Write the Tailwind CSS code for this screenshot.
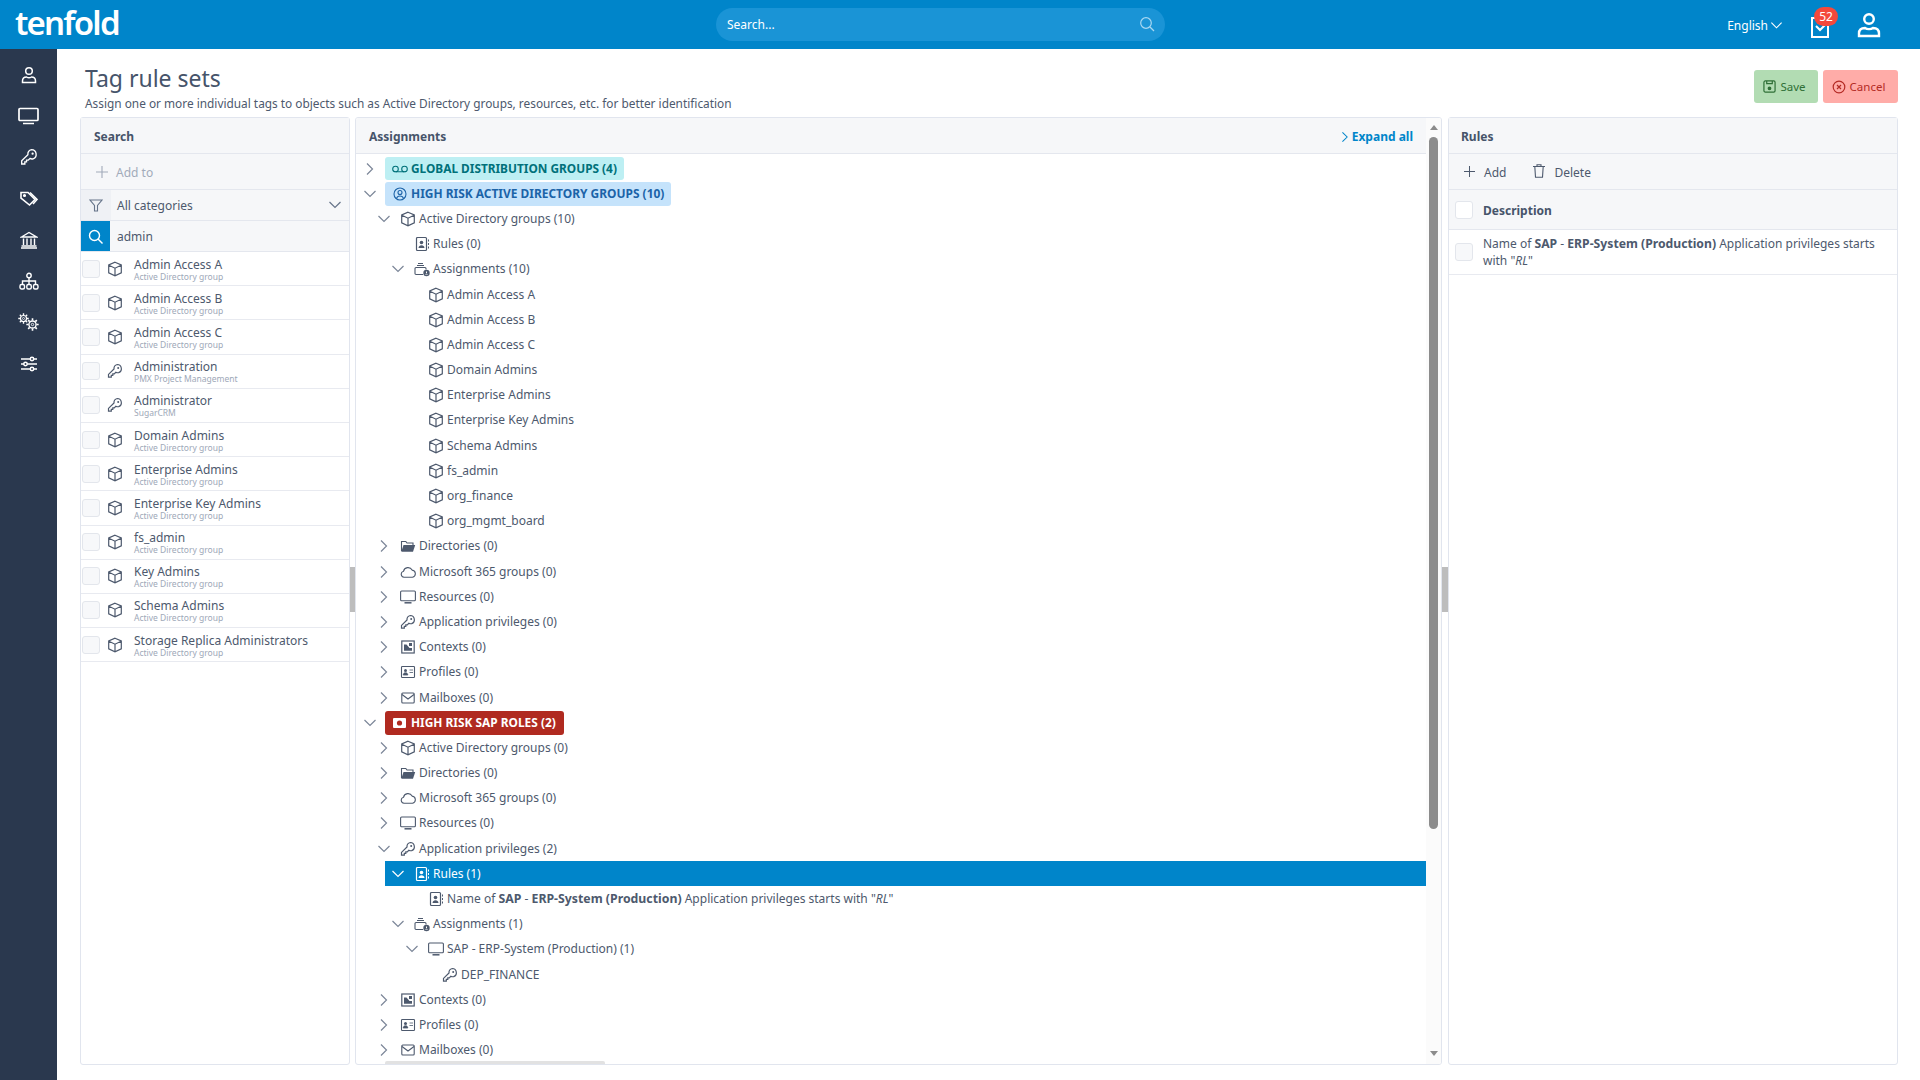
<!DOCTYPE html>
<html lang="en"><head><meta charset="utf-8"><title>Tag rule sets</title>
<script src="https://cdn.jsdelivr.net/npm/@tailwindcss/browser@4"></script></head>
<body class="m-0">
<svg class="hidden">
<defs>
<symbol id="chev-r" viewBox="0 0 14 14"><path d="M4 1.500 9.500 7 4 12.500" fill="none" stroke="currentColor" stroke-width="1.200"/></symbol>
<symbol id="chev-d" viewBox="0 0 14 14"><path d="M1.500 4 7 9.500 12.500 4" fill="none" stroke="currentColor" stroke-width="1.200"/></symbol>
<symbol id="cube" viewBox="0 0 16 16"><path d="M8 1.200 14.300 4v7.800L8 14.800l-6.300-3V4zM1.900 4.200 8 7.200l6.100-3M8 7.200v7.400" fill="none" stroke="currentColor" stroke-width="1.200"/></symbol>
<symbol id="key" viewBox="0 0 16 16"><path d="M10.300 1.500a4.200 4.200 0 0 1 1.400 8.100 4.200 4.200 0 0 1-2.900-.3L7.300 10.800H5.800v1.500H4.300v1.900H1.500v-2.800l5.500-5.500a4.200 4.200 0 0 1 3.300-4.400z" fill="none" stroke="currentColor" stroke-width="1.200"/><circle cx="11.200" cy="5" r="1" fill="currentColor"/></symbol>
<symbol id="rules" viewBox="0 0 16 16"><rect x="2.500" y="1.500" width="10" height="13" rx="1" fill="none" stroke="currentColor" stroke-width="1.200"/><circle cx="7.500" cy="6.500" r="1.800" fill="currentColor"/><path d="M4.500 12c.2-2 1.300-2.800 3-2.800s2.800.8 3 2.800z" fill="currentColor"/><path d="M14.500 3.500v2M14.500 7v2M14.500 10.500v2" stroke="currentColor" stroke-width="1"/></symbol>
<symbol id="assign" viewBox="0 0 16 16"><path d="M1 7.500a1 1 0 0 1 1-1h9a1 1 0 0 1 1 1v1M9 13.500H2a1 1 0 0 1-1-1v-5" fill="none" stroke="currentColor" stroke-width="1.100"/><path d="M3 4.500h7M4 2.500h5" stroke="currentColor" stroke-width="1.100"/><circle cx="12.500" cy="12" r="3.200" fill="currentColor"/><path d="M12.500 10.500v1.500M11.500 13.600c.3-.6 1.700-.6 2 0" stroke="#fff" stroke-width="1" fill="none"/></symbol>
<symbol id="folder" viewBox="0 0 16 16"><path d="M1.500 13V3.500h4.300l1.200 1.500h6v2" fill="none" stroke="currentColor" stroke-width="1.100"/><path d="M1.300 13.800 3.500 7h11.700l-2.200 6.800z" fill="currentColor"/></symbol>
<symbol id="cloud" viewBox="0 0 16 16"><path d="M4 13.200a3 3 0 0 1-.5-5.900 4.600 4.600 0 0 1 8.600-1.200 3.600 3.600 0 0 1 .4 7.100z" fill="none" stroke="currentColor" stroke-width="1.100"/></symbol>
<symbol id="monitor" viewBox="0 0 16 16"><rect x=".6" y="2" width="14.800" height="9.800" rx="1" fill="none" stroke="currentColor" stroke-width="1.100"/><path d="M4.500 13.800h7" stroke="currentColor" stroke-width="1.500"/></symbol>
<symbol id="ctx" viewBox="0 0 16 16"><rect x="1.800" y="2" width="12.400" height="12" fill="none" stroke="currentColor" stroke-width="1.200"/><path d="M4 11.800V5.500h2.500l3 3.500h2.500v2.800z" fill="currentColor"/><rect x="9" y="4" width="3" height="3" fill="currentColor"/></symbol>
<symbol id="profile" viewBox="0 0 16 16"><rect x="1.500" y="2.500" width="13" height="11" rx=".8" fill="none" stroke="currentColor" stroke-width="1.100"/><circle cx="5.500" cy="6.500" r="1.500" fill="currentColor"/><path d="M3.200 11c.2-1.600 1-2.200 2.300-2.200s2.100.6 2.300 2.200zM9.500 6h3.500M9.500 8.500h3.500" fill="currentColor" stroke="currentColor" stroke-width=".8"/></symbol>
<symbol id="mail" viewBox="0 0 16 16"><rect x="1.800" y="3" width="12.400" height="10" rx="1" fill="none" stroke="currentColor" stroke-width="1.100"/><path d="M2 4.500 8 9l6-4.500" fill="none" stroke="currentColor" stroke-width="1.100"/></symbol>
<symbol id="gear" viewBox="0 0 12 12"><circle cx="6" cy="6" r="3.300" fill="none" stroke="currentColor" stroke-width="1.300"/><circle cx="6" cy="6" r="1.100" fill="none" stroke="currentColor" stroke-width=".8"/><path d="M6 .3v2M6 9.700v2M.3 6h2M9.700 6h2M2 2l1.400 1.400M8.600 8.600 10 10M10 2 8.600 3.400M3.400 8.600 2 10" stroke="currentColor" stroke-width="1.500"/></symbol>
</defs>
</svg>
<div class="w-[1920px] h-[1080px] overflow-hidden flex flex-col bg-white text-[#4d596d] text-[12px]" style="font-family:'Noto Sans','Open Sans',sans-serif">
<header class="h-[49px] shrink-0 bg-[#0085ca] flex items-center text-white relative">
  <div class="w-[716px] shrink-0 pl-[15px] text-[33px] font-semibold leading-none tracking-[-1.8px] pb-[5px]">tenfold</div>
  <div class="w-[449px] h-[33px] shrink-0 rounded-full bg-[#1a94d6] flex items-center pl-[11px] pr-[10px] justify-between">
    <span class="text-[12px] pt-[1px]">Search...</span>
    <svg class="w-[16px] h-[16px] text-[#a9d8f2] -mt-[2px]" viewBox="0 0 16 16" fill="none" stroke="currentColor" stroke-width="1.200"><circle cx="7" cy="7" r="5.300"/><path d="m11 11 4 4"/></svg>
  </div>
  <div class="ml-auto flex items-center">
    <span class="text-[12px] pt-[2px]">English</span>
    <svg class="w-[13px] h-[13px] ml-[2px] mr-[27px] mt-[2px]"><use href="#chev-d"/></svg>
    <div class="relative w-[22px] h-[26px] mr-[25px] mt-[3px]">
      <svg class="w-[20px] h-[26px]" viewBox="0 0 20 26" fill="none" stroke="currentColor" stroke-width="2"><path d="M5 5H2v19h16V5"/><path d="m6 13 4 4 5-5" stroke-width="2"/></svg>
      <span class="absolute left-[4px] -top-[6px] w-[24px] h-[19px] rounded-full bg-[#f4493c] text-[12px] leading-[19px] text-center">52</span>
    </div>
    <svg class="w-[24px] h-[26px] mr-[39px]" viewBox="0 0 24 26" fill="none" stroke="currentColor" stroke-width="2.400"><circle cx="12" cy="7" r="4.800"/><path d="M2 24v-2.500c0-4 3-5.500 6-5.500 2 1.500 6 1.500 8 0 3 0 6 1.500 6 5.500V24z"/></svg>
  </div>
</header>
<div class="flex-1 flex min-h-0">
  <nav class="w-[57px] shrink-0 bg-[#2a384e] text-white pt-[5px] flex flex-col">
    <div class="h-[41.300px] flex items-center justify-center"><svg class="w-[18px] h-[18px]" viewBox="0 0 18 18" fill="none" stroke="currentColor" stroke-width="1.500"><circle cx="9" cy="5" r="3.300"/><path d="M2.500 16.500v-1.500c0-2.800 2-4 4-4 1.500 1 3.500 1 5 0 2 0 4 1.200 4 4v1.500z"/></svg></div>
    <div class="h-[41.300px] flex items-center justify-center"><svg class="w-[21px] h-[18px]" viewBox="0 0 21 18" fill="none" stroke="currentColor" stroke-width="1.700"><rect x="1" y="1.500" width="19" height="12" rx="1"/><path d="M5 16.500h11" stroke-width="1.500"/></svg></div>
    <div class="h-[41.300px] flex items-center justify-center"><svg class="w-[18px] h-[18px]"><use href="#key"/></svg></div>
    <div class="h-[41.300px] flex items-center justify-center"><svg class="w-[18px] h-[18px]" viewBox="0 0 18 18" fill="none" stroke="currentColor" stroke-width="1.600"><path d="M1 2.500h7l7 7-5.500 5.500-8.500-7z"/><path d="m10 2.500 7 7-4 4.500"/><circle cx="4.500" cy="5.500" r=".8" fill="currentColor"/></svg></div>
    <div class="h-[41.300px] flex items-center justify-center"><svg class="w-[18px] h-[18px]" viewBox="0 0 18 18" fill="none" stroke="currentColor" stroke-width="1.400"><path d="M1.500 6 9 1.500 16.500 6zM3.500 7.500v6.500M7 7.500v6.500M11 7.500v6.500M14.500 7.500v6.500M1.500 15h15M1 17h16"/></svg></div>
    <div class="h-[41.300px] flex items-center justify-center"><svg class="w-[20px] h-[18px]" viewBox="0 0 20 18" fill="none" stroke="currentColor" stroke-width="1.400"><circle cx="10" cy="3.500" r="2.200"/><path d="M10 6v3M3.500 12V9h13v3M10 9v3"/><rect x="1" y="12.500" width="4.500" height="4.500" rx="1.500"/><rect x="7.800" y="12.500" width="4.500" height="4.500" rx="1.500"/><rect x="14.500" y="12.500" width="4.500" height="4.500" rx="1.500"/></svg></div>
    <div class="h-[41.300px] relative"><svg class="absolute left-[18px] top-[11px] w-[11px] h-[11px]"><use href="#gear"/></svg><svg class="absolute left-[26px] top-[16px] w-[13px] h-[13px]"><use href="#gear"/></svg></div>
    <div class="h-[41.300px] flex items-center justify-center"><svg class="w-[18px] h-[16px]" viewBox="0 0 18 16" fill="none" stroke="currentColor" stroke-width="1.500"><path d="M1 3h16M1 8h16M1 13h16"/><circle cx="12" cy="3" r="1.700" fill="#2a384e"/><circle cx="5.500" cy="8" r="1.700" fill="#2a384e"/><circle cx="12" cy="13" r="1.700" fill="#2a384e"/></svg></div>
  </nav>
  <main class="flex-1 min-w-0 flex flex-col pl-[23px] pr-[22px]">
    <div class="h-[68px] shrink-0 flex justify-between pl-[5px]">
      <div>
        <h1 class="text-[23px] leading-[32px] mt-[13px] font-normal text-[#46546a]">Tag rule sets</h1>
        <p class="text-[11.850px] leading-[16px] mt-[1px]">Assign one or more individual tags to objects such as Active Directory groups, resources, etc. for better identification</p>
      </div>
      <div class="flex gap-[5px] pt-[21px] h-[54px] text-[11.500px]">
        <div class="w-[64px] h-[33px] rounded-[3px] bg-[#b2dcb3] text-[#2f6f36] flex items-center justify-center gap-[4px] pr-[3px]"><svg class="w-[13px] h-[13px]" viewBox="0 0 14 14" fill="none" stroke="currentColor" stroke-width="1.300"><rect x="1" y="1" width="12" height="12" rx="1.500"/><path d="M4 1v3h6V1"/><circle cx="7" cy="9" r="1.400" fill="currentColor"/></svg>Save</div>
        <div class="w-[75px] h-[33px] rounded-[3px] bg-[#ffaca8] text-[#b42b25] flex items-center justify-center gap-[4px] pr-[4px]"><svg class="w-[14px] h-[14px]" viewBox="0 0 14 14" fill="none" stroke="currentColor" stroke-width="1.200"><circle cx="7" cy="7" r="5.800"/><path d="m5 5 4 4m0-4-4 4"/></svg>Cancel</div>
      </div>
    </div>
    <div class="flex-1 min-h-0 flex pb-[15px] relative">
      <section class="w-[270px] shrink-0 border border-[#e1e5ee] rounded-[3px] flex flex-col">
        <div class="h-[36px] shrink-0 bg-[#f6f7f9] border-b border-[#e4e7ee] flex items-center pl-[13px] pt-[2px] font-bold text-[#46546a]">Search</div>
        <div class="h-[36px] shrink-0 bg-[#f6f7f9] border-b border-[#e4e7ee] flex items-center pl-[15px] pt-[3px] text-[#a2abba]"><svg class="w-[12px] h-[12px] mr-[8px] -mt-[3px]" viewBox="0 0 12 12" stroke="currentColor" stroke-width="1.100"><path d="M6 0v12M0 6h12"/></svg>Add to</div>
        <div class="h-[31px] shrink-0 bg-[#f6f7f9] border-b border-[#e4e7ee] flex items-center">
          <span class="w-[30px] h-full bg-[#eff1f5] flex items-center justify-center"><svg class="w-[14px] h-[14px] text-[#66748a]" viewBox="0 0 14 14" fill="none" stroke="currentColor" stroke-width="1.100"><path d="M1 2h12L8.500 7.500V13h-3V7.500z"/></svg></span>
          <span class="ml-[6px] pt-[1px]">All categories</span>
          <svg class="ml-auto mr-[7px] w-[14px] h-[14px] text-[#66748a]"><use href="#chev-d"/></svg>
        </div>
        <div class="h-[31px] shrink-0 bg-[#f6f7f9] border-b border-[#e4e7ee] flex items-center">
          <span class="w-[29px] h-full bg-[#0085ca] flex items-center justify-center mr-[7px]"><svg class="w-[15px] h-[15px] text-white" viewBox="0 0 15 15" fill="none" stroke="currentColor" stroke-width="1.400"><circle cx="6.500" cy="6.500" r="5"/><path d="m10 10 4.500 4.500"/></svg></span><span class="pt-[1px]">admin</span>
        </div>
        <div class="flex items-center h-[34.200px] border-b border-[#e8eaf0] pl-[1px]"><span class="w-[18px] h-[18px] rounded-[3px] border border-[#e3e6ec] bg-[#f7f8fa] shrink-0 mr-[7px]"></span><svg class="w-[16px] h-[16px] shrink-0 mr-[11px]"><use href="#cube"/></svg><div class="pt-[2px]"><div class="text-[12px] leading-[13px]">Admin Access A</div><div class="text-[8.500px] leading-[11px] text-[#9ea8b8]">Active Directory group</div></div></div>
        <div class="flex items-center h-[34.200px] border-b border-[#e8eaf0] pl-[1px]"><span class="w-[18px] h-[18px] rounded-[3px] border border-[#e3e6ec] bg-[#f7f8fa] shrink-0 mr-[7px]"></span><svg class="w-[16px] h-[16px] shrink-0 mr-[11px]"><use href="#cube"/></svg><div class="pt-[2px]"><div class="text-[12px] leading-[13px]">Admin Access B</div><div class="text-[8.500px] leading-[11px] text-[#9ea8b8]">Active Directory group</div></div></div>
        <div class="flex items-center h-[34.200px] border-b border-[#e8eaf0] pl-[1px]"><span class="w-[18px] h-[18px] rounded-[3px] border border-[#e3e6ec] bg-[#f7f8fa] shrink-0 mr-[7px]"></span><svg class="w-[16px] h-[16px] shrink-0 mr-[11px]"><use href="#cube"/></svg><div class="pt-[2px]"><div class="text-[12px] leading-[13px]">Admin Access C</div><div class="text-[8.500px] leading-[11px] text-[#9ea8b8]">Active Directory group</div></div></div>
        <div class="flex items-center h-[34.200px] border-b border-[#e8eaf0] pl-[1px]"><span class="w-[18px] h-[18px] rounded-[3px] border border-[#e3e6ec] bg-[#f7f8fa] shrink-0 mr-[7px]"></span><svg class="w-[16px] h-[16px] shrink-0 mr-[11px]"><use href="#key"/></svg><div class="pt-[2px]"><div class="text-[12px] leading-[13px]">Administration</div><div class="text-[8.500px] leading-[11px] text-[#9ea8b8]">PMX Project Management</div></div></div>
        <div class="flex items-center h-[34.200px] border-b border-[#e8eaf0] pl-[1px]"><span class="w-[18px] h-[18px] rounded-[3px] border border-[#e3e6ec] bg-[#f7f8fa] shrink-0 mr-[7px]"></span><svg class="w-[16px] h-[16px] shrink-0 mr-[11px]"><use href="#key"/></svg><div class="pt-[2px]"><div class="text-[12px] leading-[13px]">Administrator</div><div class="text-[8.500px] leading-[11px] text-[#9ea8b8]">SugarCRM</div></div></div>
        <div class="flex items-center h-[34.200px] border-b border-[#e8eaf0] pl-[1px]"><span class="w-[18px] h-[18px] rounded-[3px] border border-[#e3e6ec] bg-[#f7f8fa] shrink-0 mr-[7px]"></span><svg class="w-[16px] h-[16px] shrink-0 mr-[11px]"><use href="#cube"/></svg><div class="pt-[2px]"><div class="text-[12px] leading-[13px]">Domain Admins</div><div class="text-[8.500px] leading-[11px] text-[#9ea8b8]">Active Directory group</div></div></div>
        <div class="flex items-center h-[34.200px] border-b border-[#e8eaf0] pl-[1px]"><span class="w-[18px] h-[18px] rounded-[3px] border border-[#e3e6ec] bg-[#f7f8fa] shrink-0 mr-[7px]"></span><svg class="w-[16px] h-[16px] shrink-0 mr-[11px]"><use href="#cube"/></svg><div class="pt-[2px]"><div class="text-[12px] leading-[13px]">Enterprise Admins</div><div class="text-[8.500px] leading-[11px] text-[#9ea8b8]">Active Directory group</div></div></div>
        <div class="flex items-center h-[34.200px] border-b border-[#e8eaf0] pl-[1px]"><span class="w-[18px] h-[18px] rounded-[3px] border border-[#e3e6ec] bg-[#f7f8fa] shrink-0 mr-[7px]"></span><svg class="w-[16px] h-[16px] shrink-0 mr-[11px]"><use href="#cube"/></svg><div class="pt-[2px]"><div class="text-[12px] leading-[13px]">Enterprise Key Admins</div><div class="text-[8.500px] leading-[11px] text-[#9ea8b8]">Active Directory group</div></div></div>
        <div class="flex items-center h-[34.200px] border-b border-[#e8eaf0] pl-[1px]"><span class="w-[18px] h-[18px] rounded-[3px] border border-[#e3e6ec] bg-[#f7f8fa] shrink-0 mr-[7px]"></span><svg class="w-[16px] h-[16px] shrink-0 mr-[11px]"><use href="#cube"/></svg><div class="pt-[2px]"><div class="text-[12px] leading-[13px]">fs_admin</div><div class="text-[8.500px] leading-[11px] text-[#9ea8b8]">Active Directory group</div></div></div>
        <div class="flex items-center h-[34.200px] border-b border-[#e8eaf0] pl-[1px]"><span class="w-[18px] h-[18px] rounded-[3px] border border-[#e3e6ec] bg-[#f7f8fa] shrink-0 mr-[7px]"></span><svg class="w-[16px] h-[16px] shrink-0 mr-[11px]"><use href="#cube"/></svg><div class="pt-[2px]"><div class="text-[12px] leading-[13px]">Key Admins</div><div class="text-[8.500px] leading-[11px] text-[#9ea8b8]">Active Directory group</div></div></div>
        <div class="flex items-center h-[34.200px] border-b border-[#e8eaf0] pl-[1px]"><span class="w-[18px] h-[18px] rounded-[3px] border border-[#e3e6ec] bg-[#f7f8fa] shrink-0 mr-[7px]"></span><svg class="w-[16px] h-[16px] shrink-0 mr-[11px]"><use href="#cube"/></svg><div class="pt-[2px]"><div class="text-[12px] leading-[13px]">Schema Admins</div><div class="text-[8.500px] leading-[11px] text-[#9ea8b8]">Active Directory group</div></div></div>
        <div class="flex items-center h-[34.200px] border-b border-[#e8eaf0] pl-[1px]"><span class="w-[18px] h-[18px] rounded-[3px] border border-[#e3e6ec] bg-[#f7f8fa] shrink-0 mr-[7px]"></span><svg class="w-[16px] h-[16px] shrink-0 mr-[11px]"><use href="#cube"/></svg><div class="pt-[2px]"><div class="text-[12px] leading-[13px]">Storage Replica Administrators</div><div class="text-[8.500px] leading-[11px] text-[#9ea8b8]">Active Directory group</div></div></div>
      </section>
      <div class="w-[5px] shrink-0 flex items-start"><span class="w-full h-[45px] mt-[450px] bg-[#bdbdbd]"></span></div>
      <section class="w-[1087px] shrink-0 border border-[#e1e5ee] rounded-[3px] flex relative overflow-hidden">
        <div class="w-[1070px] shrink-0 flex flex-col">
          <div class="h-[36px] shrink-0 bg-[#f6f7f9] border-b border-[#e4e7ee] flex items-center pl-[13px] pr-[13px] pt-[2px] justify-between font-bold text-[#46546a]">Assignments<span class="flex items-center text-[#0085ca]"><svg class="w-[12px] h-[12px] mr-[1px]"><use href="#chev-r"/></svg>Expand all</span></div>
          <div class="pt-[2px]">
            <div class="flex items-center h-[25.200px] pl-[7px]"><svg class="w-[14px] h-[14px] shrink-0 mr-[8px] text-[#7b8698]"><use href="#chev-r"/></svg><span class="h-[23px] rounded-[3px] bg-[#bdeff3] text-[#00717a] font-bold text-[11.850px] px-[7px] flex items-center"><svg class="w-[16px] h-[10px] mr-[3px]" viewBox="0 0 16 10" fill="none" stroke="currentColor" stroke-width="1.100"><circle cx="3.500" cy="5" r="2.800"/><circle cx="12.500" cy="5" r="2.800"/><path d="M3.500 7.800h9"/></svg>GLOBAL DISTRIBUTION GROUPS (4)</span></div>
            <div class="flex items-center h-[25.200px] pl-[7px]"><svg class="w-[14px] h-[14px] shrink-0 mr-[8px] text-[#7b8698]"><use href="#chev-d"/></svg><span class="h-[24px] rounded-[3px] bg-[#c5e3fb] text-[#1c63a8] font-bold text-[11.950px] px-[7px] flex items-center"><svg class="w-[14px] h-[14px] mx-[1px] mr-[4px]" viewBox="0 0 14 14" fill="none" stroke="currentColor" stroke-width="1.100"><circle cx="7" cy="7" r="6"/><circle cx="7" cy="5.500" r="2"/><path d="M3.500 11.500c.5-2 2-2.500 3.500-2.500s3 .5 3.500 2.500"/></svg>HIGH RISK ACTIVE DIRECTORY GROUPS (10)</span></div>
            <div class="flex items-center h-[25.200px] pl-[21px]"><svg class="w-[14px] h-[14px] shrink-0 mr-[9px] text-[#7b8698]"><use href="#chev-d"/></svg><svg class="w-[16px] h-[16px] shrink-0 mr-[3px]"><use href="#cube"/></svg>Active Directory groups (10)</div>
            <div class="flex items-center h-[25.200px] pl-[35px]"><span class="w-[23px] shrink-0"></span><svg class="w-[16px] h-[16px] shrink-0 mr-[3px]"><use href="#rules"/></svg>Rules (0)</div>
            <div class="flex items-center h-[25.200px] pl-[35px]"><svg class="w-[14px] h-[14px] shrink-0 mr-[9px] text-[#7b8698]"><use href="#chev-d"/></svg><svg class="w-[16px] h-[16px] shrink-0 mr-[3px]"><use href="#assign"/></svg>Assignments (10)</div>
            <div class="flex items-center h-[25.200px] pl-[49px]"><span class="w-[23px] shrink-0"></span><svg class="w-[16px] h-[16px] shrink-0 mr-[3px]"><use href="#cube"/></svg>Admin Access A</div>
            <div class="flex items-center h-[25.200px] pl-[49px]"><span class="w-[23px] shrink-0"></span><svg class="w-[16px] h-[16px] shrink-0 mr-[3px]"><use href="#cube"/></svg>Admin Access B</div>
            <div class="flex items-center h-[25.200px] pl-[49px]"><span class="w-[23px] shrink-0"></span><svg class="w-[16px] h-[16px] shrink-0 mr-[3px]"><use href="#cube"/></svg>Admin Access C</div>
            <div class="flex items-center h-[25.200px] pl-[49px]"><span class="w-[23px] shrink-0"></span><svg class="w-[16px] h-[16px] shrink-0 mr-[3px]"><use href="#cube"/></svg>Domain Admins</div>
            <div class="flex items-center h-[25.200px] pl-[49px]"><span class="w-[23px] shrink-0"></span><svg class="w-[16px] h-[16px] shrink-0 mr-[3px]"><use href="#cube"/></svg>Enterprise Admins</div>
            <div class="flex items-center h-[25.200px] pl-[49px]"><span class="w-[23px] shrink-0"></span><svg class="w-[16px] h-[16px] shrink-0 mr-[3px]"><use href="#cube"/></svg>Enterprise Key Admins</div>
            <div class="flex items-center h-[25.200px] pl-[49px]"><span class="w-[23px] shrink-0"></span><svg class="w-[16px] h-[16px] shrink-0 mr-[3px]"><use href="#cube"/></svg>Schema Admins</div>
            <div class="flex items-center h-[25.200px] pl-[49px]"><span class="w-[23px] shrink-0"></span><svg class="w-[16px] h-[16px] shrink-0 mr-[3px]"><use href="#cube"/></svg>fs_admin</div>
            <div class="flex items-center h-[25.200px] pl-[49px]"><span class="w-[23px] shrink-0"></span><svg class="w-[16px] h-[16px] shrink-0 mr-[3px]"><use href="#cube"/></svg>org_finance</div>
            <div class="flex items-center h-[25.200px] pl-[49px]"><span class="w-[23px] shrink-0"></span><svg class="w-[16px] h-[16px] shrink-0 mr-[3px]"><use href="#cube"/></svg>org_mgmt_board</div>
            <div class="flex items-center h-[25.200px] pl-[21px]"><svg class="w-[14px] h-[14px] shrink-0 mr-[9px] text-[#7b8698]"><use href="#chev-r"/></svg><svg class="w-[16px] h-[16px] shrink-0 mr-[3px]"><use href="#folder"/></svg>Directories (0)</div>
            <div class="flex items-center h-[25.200px] pl-[21px]"><svg class="w-[14px] h-[14px] shrink-0 mr-[9px] text-[#7b8698]"><use href="#chev-r"/></svg><svg class="w-[16px] h-[16px] shrink-0 mr-[3px]"><use href="#cloud"/></svg>Microsoft 365 groups (0)</div>
            <div class="flex items-center h-[25.200px] pl-[21px]"><svg class="w-[14px] h-[14px] shrink-0 mr-[9px] text-[#7b8698]"><use href="#chev-r"/></svg><svg class="w-[16px] h-[16px] shrink-0 mr-[3px]"><use href="#monitor"/></svg>Resources (0)</div>
            <div class="flex items-center h-[25.200px] pl-[21px]"><svg class="w-[14px] h-[14px] shrink-0 mr-[9px] text-[#7b8698]"><use href="#chev-r"/></svg><svg class="w-[16px] h-[16px] shrink-0 mr-[3px]"><use href="#key"/></svg>Application privileges (0)</div>
            <div class="flex items-center h-[25.200px] pl-[21px]"><svg class="w-[14px] h-[14px] shrink-0 mr-[9px] text-[#7b8698]"><use href="#chev-r"/></svg><svg class="w-[16px] h-[16px] shrink-0 mr-[3px]"><use href="#ctx"/></svg>Contexts (0)</div>
            <div class="flex items-center h-[25.200px] pl-[21px]"><svg class="w-[14px] h-[14px] shrink-0 mr-[9px] text-[#7b8698]"><use href="#chev-r"/></svg><svg class="w-[16px] h-[16px] shrink-0 mr-[3px]"><use href="#profile"/></svg>Profiles (0)</div>
            <div class="flex items-center h-[25.200px] pl-[21px]"><svg class="w-[14px] h-[14px] shrink-0 mr-[9px] text-[#7b8698]"><use href="#chev-r"/></svg><svg class="w-[16px] h-[16px] shrink-0 mr-[3px]"><use href="#mail"/></svg>Mailboxes (0)</div>
            <div class="flex items-center h-[25.200px] pl-[7px]"><svg class="w-[14px] h-[14px] shrink-0 mr-[8px] text-[#7b8698]"><use href="#chev-d"/></svg><span class="h-[24px] rounded-[3px] bg-[#b02a20] text-white font-bold text-[11.900px] px-[8px] flex items-center"><svg class="w-[13px] h-[10px] mr-[5px]" viewBox="0 0 13 10"><rect width="13" height="10" rx="1" fill="#fff"/><circle cx="6.500" cy="5" r="2.600" fill="#b02a20"/></svg>HIGH RISK SAP ROLES (2)</span></div>
            <div class="flex items-center h-[25.200px] pl-[21px]"><svg class="w-[14px] h-[14px] shrink-0 mr-[9px] text-[#7b8698]"><use href="#chev-r"/></svg><svg class="w-[16px] h-[16px] shrink-0 mr-[3px]"><use href="#cube"/></svg>Active Directory groups (0)</div>
            <div class="flex items-center h-[25.200px] pl-[21px]"><svg class="w-[14px] h-[14px] shrink-0 mr-[9px] text-[#7b8698]"><use href="#chev-r"/></svg><svg class="w-[16px] h-[16px] shrink-0 mr-[3px]"><use href="#folder"/></svg>Directories (0)</div>
            <div class="flex items-center h-[25.200px] pl-[21px]"><svg class="w-[14px] h-[14px] shrink-0 mr-[9px] text-[#7b8698]"><use href="#chev-r"/></svg><svg class="w-[16px] h-[16px] shrink-0 mr-[3px]"><use href="#cloud"/></svg>Microsoft 365 groups (0)</div>
            <div class="flex items-center h-[25.200px] pl-[21px]"><svg class="w-[14px] h-[14px] shrink-0 mr-[9px] text-[#7b8698]"><use href="#chev-r"/></svg><svg class="w-[16px] h-[16px] shrink-0 mr-[3px]"><use href="#monitor"/></svg>Resources (0)</div>
            <div class="flex items-center h-[25.200px] pl-[21px]"><svg class="w-[14px] h-[14px] shrink-0 mr-[9px] text-[#7b8698]"><use href="#chev-d"/></svg><svg class="w-[16px] h-[16px] shrink-0 mr-[3px]"><use href="#key"/></svg>Application privileges (2)</div>
            <div class="flex items-center h-[25.200px] ml-[29px] pl-[6px] bg-[#0085ca] text-white"><svg class="w-[14px] h-[14px] shrink-0 mr-[9px]"><use href="#chev-d"/></svg><svg class="w-[16px] h-[16px] shrink-0 mr-[3px]"><use href="#rules"/></svg>Rules (1)</div>
            <div class="flex items-center h-[25.200px] pl-[49px]"><span class="w-[23px] shrink-0"></span><svg class="w-[16px] h-[16px] shrink-0 mr-[3px]"><use href="#rules"/></svg><span class="whitespace-pre">Name of <b class="text-[12.300px]">SAP</b> - <b class="text-[12.300px]">ERP-System (Production)</b> Application privileges starts with "<i>RL</i>"</span></div>
            <div class="flex items-center h-[25.200px] pl-[35px]"><svg class="w-[14px] h-[14px] shrink-0 mr-[9px] text-[#7b8698]"><use href="#chev-d"/></svg><svg class="w-[16px] h-[16px] shrink-0 mr-[3px]"><use href="#assign"/></svg>Assignments (1)</div>
            <div class="flex items-center h-[25.200px] pl-[49px]"><svg class="w-[14px] h-[14px] shrink-0 mr-[9px] text-[#7b8698]"><use href="#chev-d"/></svg><svg class="w-[16px] h-[16px] shrink-0 mr-[3px]"><use href="#monitor"/></svg>SAP - ERP-System (Production) (1)</div>
            <div class="flex items-center h-[25.200px] pl-[63px]"><span class="w-[23px] shrink-0"></span><svg class="w-[16px] h-[16px] shrink-0 mr-[3px]"><use href="#key"/></svg>DEP_FINANCE</div>
            <div class="flex items-center h-[25.200px] pl-[21px]"><svg class="w-[14px] h-[14px] shrink-0 mr-[9px] text-[#7b8698]"><use href="#chev-r"/></svg><svg class="w-[16px] h-[16px] shrink-0 mr-[3px]"><use href="#ctx"/></svg>Contexts (0)</div>
            <div class="flex items-center h-[25.200px] pl-[21px]"><svg class="w-[14px] h-[14px] shrink-0 mr-[9px] text-[#7b8698]"><use href="#chev-r"/></svg><svg class="w-[16px] h-[16px] shrink-0 mr-[3px]"><use href="#profile"/></svg>Profiles (0)</div>
            <div class="flex items-center h-[25.200px] pl-[21px]"><svg class="w-[14px] h-[14px] shrink-0 mr-[9px] text-[#7b8698]"><use href="#chev-r"/></svg><svg class="w-[16px] h-[16px] shrink-0 mr-[3px]"><use href="#mail"/></svg>Mailboxes (0)</div>
          </div>
          <span class="absolute left-[29px] bottom-0 w-[220px] h-[3px] rounded-t-[2px] bg-[#e2e2e2]"></span>
        </div>
        <div class="w-[15px] shrink-0 bg-[#fbfbfb] flex flex-col items-center">
          <span class="mt-[7px] w-0 h-0 border-x-[4.500px] border-x-transparent border-b-[5px] border-b-[#8c8c8c]"></span>
          <span class="mt-[7px] w-[9px] h-[692px] rounded-[5px] bg-[#8c8c8c]"></span>
          <span class="mt-auto mb-[8px] w-0 h-0 border-x-[4.500px] border-x-transparent border-t-[5px] border-t-[#8c8c8c]"></span>
        </div>
      </section>
      <div class="w-[6px] shrink-0 flex items-start"><span class="w-full h-[45px] mt-[450px] bg-[#bdbdbd]"></span></div>
      <section class="flex-1 min-w-0 border border-[#e1e5ee] rounded-[3px] flex flex-col">
        <div class="h-[36px] shrink-0 bg-[#f6f7f9] border-b border-[#e4e7ee] flex items-center pl-[12px] pt-[2px] font-bold text-[#46546a]">Rules</div>
        <div class="h-[36px] shrink-0 bg-[#f6f7f9] border-b border-[#e4e7ee] flex items-center pl-[15px] pt-[3px]"><svg class="w-[11px] h-[11px] mr-[9px] -mt-[3px]" viewBox="0 0 12 12" stroke="currentColor" stroke-width="1.100"><path d="M6 0v12M0 6h12"/></svg>Add<svg class="w-[12px] h-[14px] ml-[27px] mr-[9px] -mt-[4px]" viewBox="0 0 12 14" fill="none" stroke="currentColor" stroke-width="1.100"><path d="M0 2.500h12M4 2.500V.8h4v1.700M1.800 2.500l.7 10.800h7l.7-10.800"/></svg>Delete</div>
        <div class="h-[40px] shrink-0 bg-[#f6f7f9] border-b border-[#e4e7ee] flex items-center pl-[6px] pt-[2px] font-bold text-[#46546a]"><span class="w-[18px] h-[18px] rounded-[3px] border border-[#e3e6ec] bg-white mr-[10px] -mt-[2px]"></span>Description</div>
        <div class="h-[45px] shrink-0 border-b border-[#e8eaf0] flex items-center pl-[6px] pr-[16px]"><span class="w-[18px] h-[18px] shrink-0 rounded-[3px] border border-[#e3e6ec] bg-[#f7f8fa] mr-[10px]"></span><p class="leading-[17px]">Name of <b class="text-[12.200px]">SAP</b> - <b class="text-[12.200px]">ERP-System (Production)</b> Application privileges starts with "<i>RL</i>"</p></div>
      </section>
    </div>
  </main>
</div>
</div>
</body></html>
